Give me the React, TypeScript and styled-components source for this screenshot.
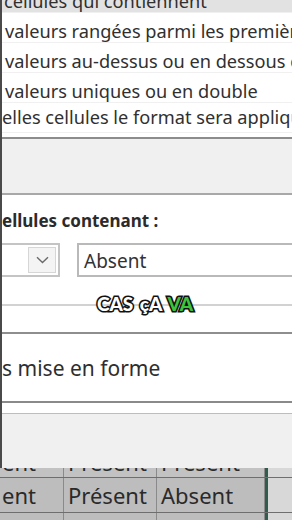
import React from "react";
import styled, { createGlobalStyle } from "styled-components";

const Global = createGlobalStyle`
  html, body { margin: 0; padding: 0; background: #f0f0f0; }
  #root { width: 292px; height: 520px; overflow: hidden; }
`;

const Screen = styled.div`
  width: 292px;
  height: 520px;
  overflow: hidden;
  display: grid;
  grid-template-rows: 468px 52px;
  background: #f0f0f0;
  font-family: "Noto Sans", "Open Sans", sans-serif;
  color: #333;
`;

const Dialog = styled.div`
  display: flex;
  flex-direction: column;
  border-left: 2px solid #4a4a4a;
  overflow: hidden;
  position: relative;
  & > * { flex-shrink: 0; }
`;

const RuleList = styled.div`
  height: 137px;
  overflow: hidden;
  background: #fff;
  border-bottom: 2px solid #8c8c8c;
`;

const RuleScroll = styled.div`
  margin-top: -17px;
  display: flex;
  flex-direction: column;
`;

const RuleRow = styled.div<{ $selected?: boolean; $shift?: number }>`
  height: 30px;
  box-sizing: border-box;
  border-bottom: 1px solid #f0f0f0;
  background: ${(p) => (p.$selected ? "#e2e2e2" : "#fff")};
  padding: 4px 0 0 ${(p) => p.$shift ?? 1}px;
  font-size: 18.2px;
  line-height: 28px;
  white-space: nowrap;
  color: #303030;
  overflow: hidden;
`;

const Gap = styled.div<{ $h: number }>`
  height: ${(p) => p.$h}px;
  background: #f0f0f0;
`;

const EditPanel = styled.div`
  position: relative;
  background: #fff;
  border-top: 2px solid #a8a8a8;
  display: flex;
  flex-direction: column;
  & > * { flex-shrink: 0; }
`;

const FieldLabel = styled.div`
  font-size: 17px;
  font-weight: 700;
  color: #2b2b2b;
  line-height: 20px;
  padding: 16px 0 0 0;
  height: 48px;
  box-sizing: border-box;
  white-space: nowrap;
`;

const ControlRow = styled.div`
  display: flex;
  align-items: stretch;
  gap: 17px;
  height: 34px;
  margin-left: -4px;
`;

const SelectBox = styled.div`
  width: 62px;
  box-sizing: border-box;
  border: 2px solid #c4c4c4;
  border-left: none;
  display: flex;
  justify-content: flex-end;
  padding: 2px;
`;

const DropButton = styled.div`
  width: 28px;
  box-sizing: border-box;
  background: #f4f4f4;
  border: 1px solid #d6d6d6;
  display: flex;
  align-items: center;
  justify-content: center;
`;

const TextInput = styled.div`
  flex: 1;
  box-sizing: border-box;
  border: 2px solid #b9b9b9;
  border-right: none;
  font-size: 19px;
  line-height: 30px;
  padding: 1px 0 0 5px;
  color: #333;
`;

const Rule = styled.div<{ $color: string; $w: number; $mt: number }>`
  height: ${(p) => p.$w}px;
  background: ${(p) => p.$color};
  margin-top: ${(p) => p.$mt}px;
`;

const Preview = styled.div`
  font-size: 21px;
  line-height: 30px;
  padding: 19px 0 0 0;
  height: 67px;
  box-sizing: border-box;
  color: #2e2e2e;
  white-space: nowrap;
`;

const Caption = styled.div`
  position: absolute;
  left: 95px;
  top: 99px;
  font-family: Lato, "Noto Sans", sans-serif;
  font-weight: 900;
  font-size: 19px;
  line-height: 20px;
  word-spacing: 2px;
  color: #fff;
  -webkit-text-stroke: 3.2px #111;
  paint-order: stroke fill;
  white-space: nowrap;
`;

const Green = styled.span`
  color: #3cc43c;
`;

const Sheet = styled.div`
  overflow: hidden;
  background: #6e6e6e;
`;

const SheetGrid = styled.div`
  display: grid;
  grid-template-columns: 64px 93px 108px 3px 1fr;
  grid-template-rows: 9px 34px 8px;
  row-gap: 1px;
`;

const Cell = styled.div<{ $indent?: number; $clipTop?: boolean }>`
  background: ${(p) => (p.$clipTop ? "#c2c2c2" : "#bdbdbd")};
  border-right: 1px solid #8a8a8a;
  font-size: 22px;
  line-height: 33px;
  padding-left: ${(p) => p.$indent ?? 4}px;
  box-sizing: border-box;
  color: #2a2a2a;
  white-space: nowrap;
  overflow: hidden;
  min-height: 0;
  display: flex;
  align-items: ${(p) => (p.$clipTop ? "flex-end" : "flex-start")};
  & > span {
    display: block;
    margin-bottom: ${(p) => (p.$clipTop ? "-2px" : "0")};
    padding-top: ${(p) => (p.$clipTop ? "0" : "1px")};
  }
`;

const SelEdge = styled.div`
  background: #2f5c4d;
`;

const OutCell = styled.div`
  background: #d8d8d8;
`;

const Chevron = () => (
  <svg width="13" height="8" viewBox="0 0 13 8" fill="none">
    <path d="M1 1.2 L6.5 6.5 L12 1.2" stroke="#6a6a6a" strokeWidth="1.4" />
  </svg>
);

const sheetRows: { first: string; mid: string; last: string; clip?: boolean }[] = [
  { first: "ent", mid: "Présent", last: "Présent", clip: true },
  { first: "ent", mid: "Présent", last: "Absent" },
  { first: "ent", mid: "Absent", last: "Présent" },
];

export default function App() {
  return (
    <>
      <Global />
      <Screen>
        <Dialog>
          <RuleList>
            <RuleScroll>
              <RuleRow $selected $shift={2}>cellules qui contiennent</RuleRow>
              <RuleRow $shift={3}>valeurs rangées parmi les premières ou les dernières valeurs</RuleRow>
              <RuleRow $shift={3}>valeurs au-dessus ou en dessous de la moyenne</RuleRow>
              <RuleRow $shift={3}>valeurs uniques ou en double</RuleRow>
              <RuleRow $shift={-1}>elles cellules le format sera appliqué</RuleRow>
            </RuleScroll>
          </RuleList>
          <Gap $h={54} />
          <EditPanel>
            <FieldLabel>ellules contenant :</FieldLabel>
            <ControlRow>
              <SelectBox>
                <DropButton>
                  <Chevron />
                </DropButton>
              </SelectBox>
              <TextInput>Absent</TextInput>
            </ControlRow>
            <Rule $color="#d2d2d2" $w={2} $mt={27} />
            <Rule $color="#8e8e8e" $w={2} $mt={26} />
            <Preview>s mise en forme</Preview>
            <Rule $color="#8a8a8a" $w={2} $mt={0} />
            <Rule $color="#bdbdbd" $w={1} $mt={10} />
            <Caption>
              CAS çA <Green>VA</Green>
            </Caption>
          </EditPanel>
        </Dialog>
        <Sheet>
          <SheetGrid>
            {sheetRows.map((r, i) => (
              <React.Fragment key={i}>
                <Cell $indent={2} $clipTop={r.clip}><span>{r.first}</span></Cell>
                <Cell $clipTop={r.clip}><span>{r.mid}</span></Cell>
                <Cell $clipTop={r.clip}><span>{r.last}</span></Cell>
                <SelEdge />
                <OutCell />
              </React.Fragment>
            ))}
          </SheetGrid>
        </Sheet>
      </Screen>
    </>
  );
}
